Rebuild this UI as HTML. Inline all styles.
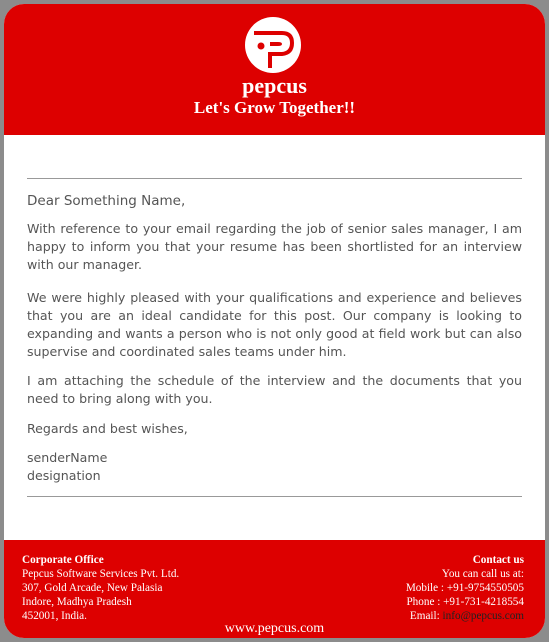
<!DOCTYPE html>
<html><head><meta charset="utf-8"><style>
html,body{margin:0;padding:0;}
body{width:549px;height:642px;background:#8c8c8c;position:relative;overflow:hidden;}
.card{position:absolute;left:4px;top:4px;width:541px;height:634px;background:#fff;border-radius:20px;overflow:hidden;}
.hdr{position:absolute;left:0;top:0;width:541px;height:131px;background:#dd0000;text-align:center;color:#fff;font-family:"Liberation Serif",serif;font-weight:bold;}
.brand{position:absolute;left:0;width:100%;top:70px;font-size:22px;line-height:24px;}
.tag{position:absolute;left:0;width:100%;top:94px;font-size:17px;line-height:20px;}
.body{position:absolute;left:23px;top:174px;width:495px;font-family:"DejaVu Sans",Verdana,sans-serif;font-size:12.6px;color:#555;line-height:18px;text-align:justify;}
.body hr{border:0;border-top:1px solid #999;margin:0;}
.body p{margin:0 0 15px 0;}
.ftr{position:absolute;left:0;top:536px;width:541px;height:98px;background:#dd0000;color:#fff;font-family:"Liberation Serif",serif;font-size:11.2px;line-height:14px;}
.fl{position:absolute;left:18px;top:13px;}
.fr{position:absolute;right:21px;top:13px;text-align:right;}
.web{position:absolute;left:0;width:100%;top:81px;text-align:center;font-size:14px;line-height:16px;}
</style></head><body>
<div class="card">
<div class="hdr">
<svg style="position:absolute;left:240px;top:12px" width="58" height="58" viewBox="0 0 58 58">
<circle cx="29" cy="29" r="28" fill="#fff"/>
<path d="M10 17 L38 17 Q48 17 48 27 Q48 37 38 38 L26 38 L26 52" stroke="#dd0000" stroke-width="4" fill="none"/>
<path d="M26 26 L34 26 Q38 26 38 28 Q38 30 34 30 L26 30Z" fill="#dd0000"/>
<circle cx="17" cy="30" r="3.5" fill="#dd0000"/>
</svg>
<div class="brand">pepcus</div>
<div class="tag">Let's Grow Together!!</div>
</div>
<div class="body">
<hr style="margin-bottom:13px">
<p style="font-size:13.5px;margin-bottom:10px">Dear Something Name,</p>
<p>With reference to your email regarding the job of senior sales manager, I am happy to inform you that your resume has been shortlisted for an interview with our manager.</p>
<p style="margin-bottom:11px">We were highly pleased with your qualifications and experience and believes that you are an ideal candidate for this post. Our company is looking to expanding and wants a person who is not only good at field work but can also supervise and coordinated sales teams under him.</p>
<p style="margin-bottom:12px">I am attaching the schedule of the interview and the documents that you need to bring along with you.</p>
<p style="margin-bottom:11px">Regards and best wishes,</p>
<p style="margin-bottom:11px">senderName<br>designation</p>
<hr>
</div>
<div class="ftr">
<div class="fl"><b>Corporate Office</b><br>Pepcus Software Services Pvt. Ltd.<br>307, Gold Arcade, New Palasia<br>Indore, Madhya Pradesh<br>452001, India.</div>
<div class="fr"><b>Contact us</b><br>You can call us at:<br>Mobile : +91-9754550505<br>Phone : +91-731-4218554<br>Email: <span style="color:#222">info@pepcus.com</span></div>
<div class="web">www.pepcus.com</div>
</div>
</div>
</body></html>
